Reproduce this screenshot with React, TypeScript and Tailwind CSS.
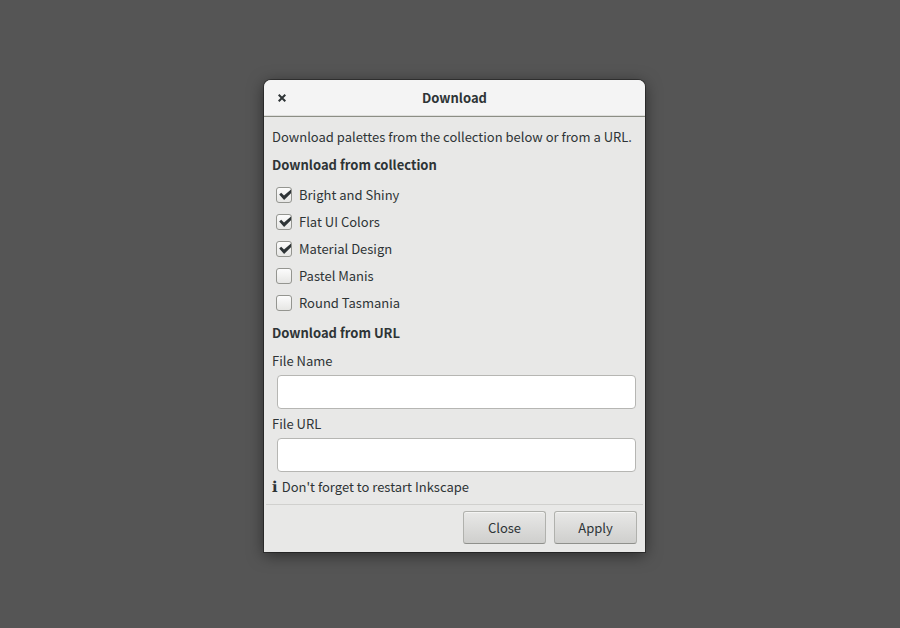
import { useState } from "react";
import type { ReactNode } from "react";

const palettes = [
  { id: "bright", name: "Bright and Shiny", selected: true },
  { id: "flat", name: "Flat UI Colors", selected: true },
  { id: "material", name: "Material Design", selected: true },
  { id: "pastel", name: "Pastel Manis", selected: false },
  { id: "tasmania", name: "Round Tasmania", selected: false },
];

function PaletteOption({ id, name, selected }: { id: string; name: string; selected: boolean }) {
  const [checked, setChecked] = useState(selected);
  return (
    <li className="flex h-[27px] items-center gap-[7px]">
      <span className="grid size-4 shrink-0">
        <input
          id={id}
          type="checkbox"
          checked={checked}
          onChange={(e) => setChecked(e.target.checked)}
          className="peer col-start-1 row-start-1 size-4 appearance-none rounded-[3px] border border-[#949590] bg-linear-to-b from-[#fcfcfc] to-[#e6e6e4]"
        />
        <svg
          viewBox="0 0 16 16"
          aria-hidden="true"
          className="pointer-events-none invisible col-start-1 row-start-1 size-4 peer-checked:visible"
        >
          <path d="M3.2 7.6 5.2 5.8 8 8.4 15 2.6v3.6L8.1 13Z" fill="#2e3436" />
        </svg>
      </span>
      <label htmlFor={id}>{name}</label>
    </li>
  );
}

function Field({ id, label }: { id: string; label: string }) {
  return (
    <div className="flex flex-col gap-1">
      <label htmlFor={id}>{label}</label>
      <input
        id={id}
        type="text"
        className="mr-px ml-[5px] h-[34px] rounded border border-[#b6b6b3] bg-white px-2 outline-none"
      />
    </div>
  );
}

function ActionButton({ children }: { children: ReactNode }) {
  return (
    <button
      type="button"
      className="h-[33px] w-[83px] rounded-[3px] border border-[#b0b1ad] border-b-[#8f908c] bg-linear-to-b from-[#e8e8e7] to-[#cfcfcd] shadow-[inset_0_1px_#f4f4f3]"
    >
      {children}
    </button>
  );
}

export default function App() {
  return (
    <main className="flex min-h-screen items-center justify-center bg-[#555555] pt-1 pl-[9px] font-['Noto_Sans_CJK_SC',sans-serif] text-[13px] leading-5 text-[#2e3436]">
      <section
        role="dialog"
        aria-labelledby="title"
        className="w-full max-w-[381px] rounded-t-[7px] bg-[#e8e8e7] shadow-[0_0_0_1px_rgba(0,0,0,0.35),0_3px_16px_rgba(0,0,0,0.5)]"
      >
        <header className="grid h-[37px] grid-cols-[36px_1fr_36px] items-center rounded-t-[7px] border-b border-[#8c8e85] bg-[#f4f4f4] shadow-[inset_0_-1px_#dededc]">
          <button type="button" aria-label="Close dialog" className="grid h-9 place-items-center">
            <svg viewBox="0 0 8 8" aria-hidden="true" className="size-2">
              <path d="M.7.7l6.6 6.6M7.3.7L.7 7.3" stroke="#2e3436" strokeWidth="2" />
            </svg>
          </button>
          <h1 id="title" className="text-center font-bold">Download</h1>
        </header>
        <form className="px-2 pt-[10px] pb-[7px]">
          <p>Download palettes from the collection below or from a URL.</p>
          <h2 className="mt-2 font-bold">Download from collection</h2>
          <ul className="mt-[6px] ml-1">
            {palettes.map((p) => (
              <PaletteOption key={p.id} {...p} />
            ))}
          </ul>
          <h2 className="mt-[7px] mb-2 font-bold">Download from URL</h2>
          <div className="flex flex-col gap-[5px]">
            <Field id="file-name" label="File Name" />
            <Field id="file-url" label="File URL" />
            <p className="flex items-center gap-1">
              <span className="font-['DejaVu_Sans',sans-serif] text-[15px] leading-5">ℹ</span>
              <span>Don't forget to restart Inkscape</span>
            </p>
          </div>
        </form>
        <footer className="mx-[2px] flex justify-end gap-2 border-t border-[#d0d0ce] px-[6px] pt-[6px] pb-2">
          <ActionButton>Close</ActionButton>
          <ActionButton>Apply</ActionButton>
        </footer>
      </section>
    </main>
  );
}
